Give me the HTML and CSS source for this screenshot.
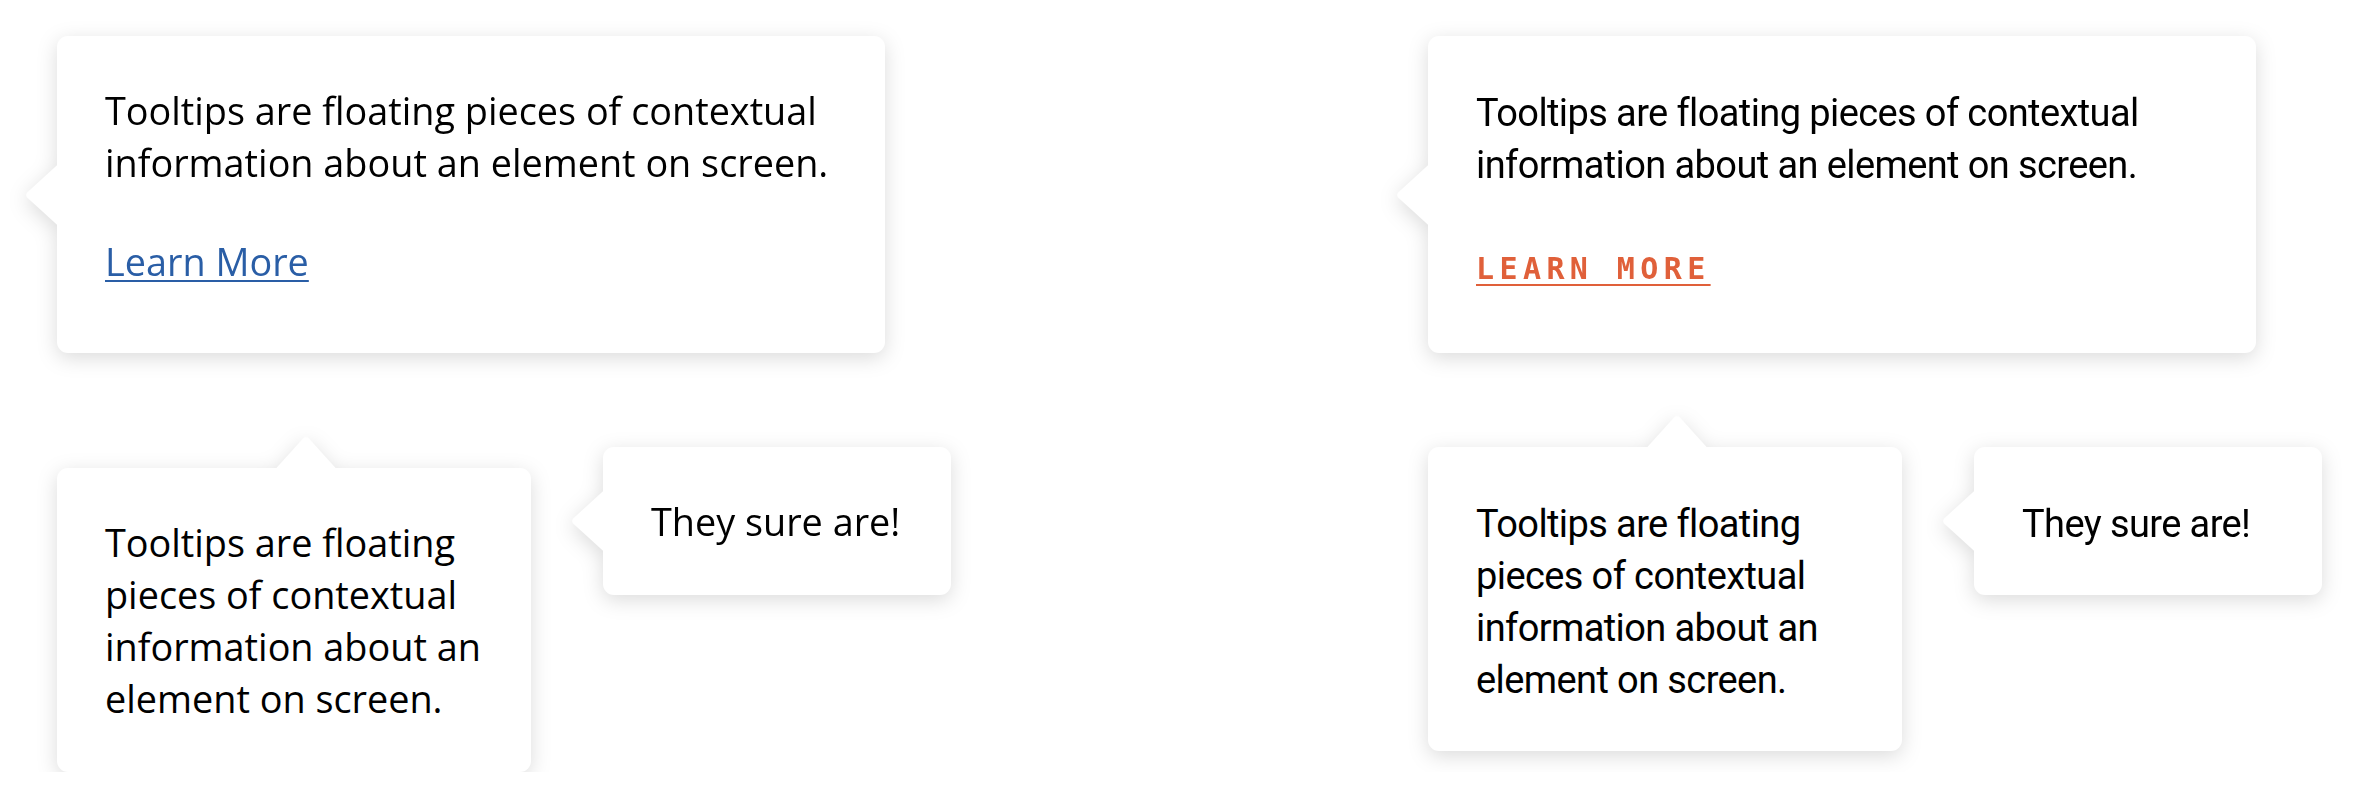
FILE: index.html
```html
<!DOCTYPE html>
<html lang="en">
  <head>
    <meta charset="UTF-8" />
    <title>Tooltips</title>
    <link rel="stylesheet" href="styles.css">
  </head>
  <body>
    <main class="page">
      <!-- Variant 1: humanist sans, plain link -->
      <section class="panel panel-open">
        <div class="tip tip-left tip-wide">
          <p>Tooltips are floating pieces of contextual information about an element on screen.</p>
          <a class="tip-link" href="#">Learn More</a>
        </div>
        <div class="tip-row">
          <div class="tip tip-up tip-medium tip-drop">
            <p>Tooltips are floating pieces of contextual information about an element on screen.</p>
          </div>
          <div class="tip tip-left tip-small">
            <p>They sure are!</p>
          </div>
        </div>
      </section>

      <!-- Variant 2: grotesk, mono caps link -->
      <section class="panel panel-grotesk">
        <div class="tip tip-left tip-wide">
          <p>Tooltips are floating pieces of contextual information about an element on screen.</p>
          <a class="tip-link" href="#">Learn More</a>
        </div>
        <div class="tip-row">
          <div class="tip tip-up tip-medium">
            <p>Tooltips are floating pieces of contextual information about an element on screen.</p>
          </div>
          <div class="tip tip-left tip-small">
            <p>They sure are!</p>
          </div>
        </div>
      </section>
    </main>
  </body>
</html>
```

FILE: styles.css
```css
body {
  margin: 0;
  background: #ffffff;
  color: #000000;
}

.page {
  display: flex;
  gap: 477px;
  padding: 36px 0 0 57px;
}

.panel {
  display: flex;
  flex-direction: column;
  gap: 94px;
}

.tip-row {
  display: flex;
  align-items: flex-start;
  gap: 72px;
}

/* Tooltip box */
.tip {
  position: relative;
  box-sizing: border-box;
  padding: 49px 48px 47px;
  background: #ffffff;
  border-radius: 11px;
  line-height: 52px;
  filter: drop-shadow(0 5px 10px rgba(0, 0, 0, 0.14));
}

.tip p {
  margin: 0;
}

/* Arrow: rotated square half hidden behind the box edge */
.tip::before {
  content: "";
  position: absolute;
  width: 42px;
  height: 42px;
  background: #ffffff;
}

.tip-left::before {
  left: -21px;
  top: calc(50% - 21px);
  border-bottom-left-radius: 4px;
  transform: scaleX(1.1) rotate(45deg);
}

.tip-up::before {
  left: 228px;
  top: -21px;
  border-top-left-radius: 4px;
  transform: scaleY(1.1) rotate(45deg);
}

.tip-wide {
  width: 828px;
}

.tip-medium {
  width: 474px;
}

.tip-small {
  width: 348px;
}

.tip-drop {
  margin-top: 21px;
}

.tip-link {
  display: block;
  text-decoration: underline;
  text-decoration-thickness: 2px;
}

/* Variant 1 */
.panel-open .tip {
  font-family: "Open Sans", sans-serif;
  font-size: 37.8px;
}

.panel-open .tip-wide {
  padding-bottom: 65px;
}

.panel-open .tip-link {
  margin-top: 47px;
  color: #2a5ea6;
  text-underline-offset: 4px;
}

/* Variant 2 */
.panel-grotesk .tip {
  font-family: Roboto, sans-serif;
  font-size: 38px;
  letter-spacing: -0.6px;
  padding-top: 51px;
  padding-bottom: 45px;
}

.panel-grotesk .tip-wide {
  padding-bottom: 58px;
}

.panel-grotesk .tip-link {
  margin-top: 52px;
  font-family: "DejaVu Sans Mono", monospace;
  font-weight: bold;
  font-size: 30px;
  letter-spacing: 5.4px;
  text-transform: uppercase;
  color: #e0603a;
  text-underline-offset: 5px;
}
```
